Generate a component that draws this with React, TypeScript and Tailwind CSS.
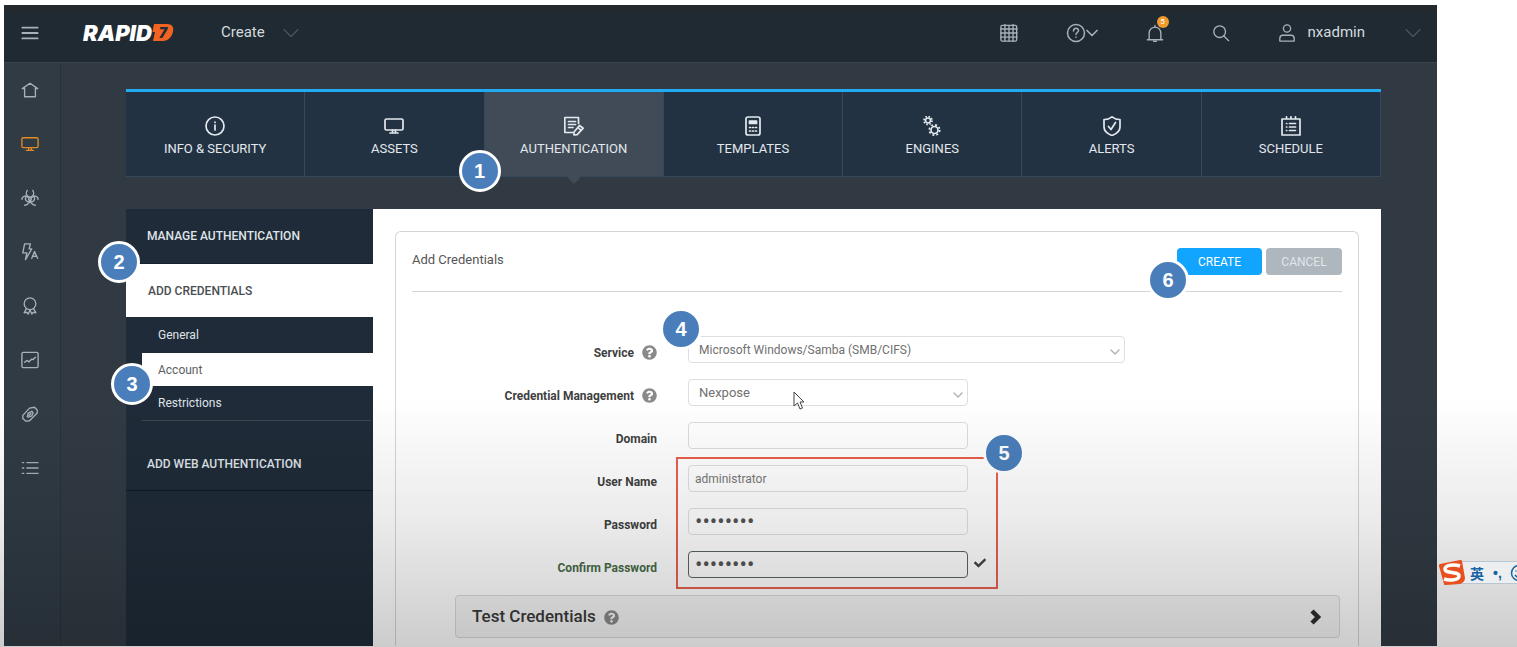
import { useState, type ReactNode } from 'react';
import { ChevronDown } from 'lucide-react';
import { FaCheck, FaQuestionCircle } from 'react-icons/fa';
import clsx from 'clsx';

const Icon = ({ size = 20, stroke = 1.5, children }: { size?: number; stroke?: number; children: ReactNode }) => (
  <svg
    width={size}
    height={size}
    viewBox="0 0 20 20"
    fill="none"
    stroke="currentColor"
    strokeWidth={stroke}
    strokeLinecap="round"
    strokeLinejoin="round"
    aria-hidden="true"
  >
    {children}
  </svg>
);

const MonitorIcon = () => (
  <>
    <rect x="1" y="3" width="18" height="11" rx="1.5" />
    <path d="M8.5 14v2.500M11.500 14v2.500M6 17h8" />
  </>
);

const sidebarItems = [
  { name: 'Home', icon: <path d="M1.500 8.500 10 2.500l8.500 6M4 8v9.500h12V8M1.500 8.500H4M16 8.500h2.500" /> },
  { name: 'Assets', active: true, icon: <MonitorIcon /> },
  {
    name: 'Vulnerabilities',
    icon: (
      <>
        <circle cx="10" cy="11" r="1.500" />
        <path d="M7 1.500C4.500 4.500 6 8.500 10 9c4-.5 5.500-4.500 3-7.500" />
        <path d="M1 11.500c.5-4 5.500-5 7.500-1.500M19 11.500c-.5-4-5.500-5-7.500-1.500" />
        <path d="M9.300 12.500C9.500 15.500 7 18 4 18M10.700 12.500C10.500 15.500 13 18 16 18M5.500 8.500c-1.500 3 0 6 4.500 6.500 4.500-.5 6-3.500 4.500-6.500" />
      </>
    ),
  },
  {
    name: 'Automated actions',
    icon: (
      <>
        <path d="M4 1h6.500L9 6.500h3L5 18.500 6.500 11H2z" />
        <path d="m12 17 3-7.500 3.500 7.500M13 14.700h4.500" />
      </>
    ),
  },
  {
    name: 'Policies',
    icon: (
      <>
        <circle cx="10" cy="7.500" r="6.500" />
        <path d="m6 13-2.500 4.500 3-.5 1.500 2 2-4.500 2 4.500 1.500-2 3 .5L14 13" />
      </>
    ),
  },
  {
    name: 'Reports',
    icon: (
      <>
        <rect x="1" y="1.500" width="18" height="17" rx="1.500" />
        <path d="m4 12.500 2.500-2L9 12l3-3 1.500.5L16 7" />
      </>
    ),
  },
  {
    name: 'Tags',
    icon: (
      <>
        <path d="M9.500 3.500 15 2.500l3 3V9l-8.500 8.500-4 .5L2 15v-3.500z" />
        <path d="m7 13 1-4 4-2 1.500 1.500L12 12l-4 1.500zM9 11.500l2-2" />
      </>
    ),
  },
  {
    name: 'Administration',
    icon: <path d="M1.500 4H3M1.500 10H3M1.500 16H3M6.500 4H19M6.500 10H19M6.500 16H19" />,
  },
];

const tabs = [
  {
    name: 'INFO & SECURITY',
    icon: (
      <>
        <circle cx="10" cy="10" r="9" />
        <path d="M10 9v5M10 6.200v.3" />
      </>
    ),
  },
  { name: 'ASSETS', icon: <MonitorIcon /> },
  {
    name: 'AUTHENTICATION',
    icon: (
      <>
        <path d="M14.500 7.500V1.500H.8v15h8M4.500 5.500h7M4.500 8.500h7M4.500 11.500H9" />
        <path d="m10 16 5.500-6.500 3.700 2.700-6 6.500-3.200.3zM14 11.500l2.500 2.500" />
      </>
    ),
  },
  {
    name: 'TEMPLATES',
    icon: (
      <>
        <rect x="3" y="1" width="14" height="18" rx="2" />
        <path d="M6.500 5h7v2.500h-7z" fill="currentColor" />
        <path d="M6.500 11.500h1M9.500 11.500h1M12.500 11.500h1M6.500 15h1M9.500 15h1M12.500 15h1" />
      </>
    ),
  },
  {
    name: 'ENGINES',
    icon: (
      <g strokeLinecap="butt">
        <circle cx="6" cy="4.500" r="2.500" />
        <circle cx="6" cy="4.500" r="4" strokeDasharray="1.570 1.570" />
        <circle cx="12.500" cy="14" r="3.500" />
        <circle cx="12.500" cy="14" r="5.200" strokeDasharray="2.040 2.040" />
      </g>
    ),
  },
  {
    name: 'ALERTS',
    icon: (
      <>
        <path d="M10 .8c2.500 2 5 2.700 8 2.700V11c0 4-4 7-8 8.500C6 18 2 15 2 11V3.500C5 3.500 7.500 2.800 10 .8z" />
        <path d="m6.500 10.500 2.500 3 4.500-7" />
      </>
    ),
  },
  {
    name: 'SCHEDULE',
    icon: (
      <>
        <path d="M1 3h18v16H1zM5.500.8V3M10 .8V3M14.500.8V3" />
        <path d="M5.500 7.500h.3M8.500 7.500h6M5.500 11h.3M8.500 11h6M5.500 14.500h.3M8.500 14.500h6" />
      </>
    ),
  },
];

const StepBadge = ({ step, className }: { step: number; className: string }) => (
  <span
    className={clsx(
      'absolute z-20 flex size-[42px] items-center justify-center rounded-full border-[3px] border-white bg-[#4a7ebb] font-["Liberation_Sans",sans-serif] text-xl font-bold text-white',
      className,
    )}
  >
    {step}
  </span>
);

const Logo = () => (
  <a href="#" aria-label="Rapid7" className="flex w-[95px] items-center">
    <span className='font-["Inter",sans-serif] text-[22px] leading-7 font-black text-white italic'>RAPID</span>
    <span className="relative flex h-[17px] w-[22px] shrink-0 items-center justify-center">
      <svg className="absolute inset-0" width="22" height="17" viewBox="0 0 22 17" aria-hidden="true">
        <path d="M2 0h13c5 0 7 3 6 7.500C20 13 16 17 11 17H1l2-9H.5z" fill="#f26322" />
      </svg>
      <span className='relative font-["Inter",sans-serif] text-sm leading-4 font-black text-[#1f2a33] italic'>7</span>
    </span>
  </a>
);

const Header = () => (
  <header className="flex h-[58px] items-center border-t-[6px] border-b border-t-[#26292c] border-b-[#3a444d] bg-[#1f2a33] pr-[10px] pb-2 text-[#a9b1b8]">
    <button aria-label="Menu" className="flex w-[57px] justify-center pr-1.5">
      <Icon size={18} stroke={2}>
        <path d="M1.500 4h17M1.500 10h17M1.500 16h17" />
      </Icon>
    </button>
    <div className="pl-[22px]">
      <Logo />
    </div>
    <button className="ml-[43px] flex items-center gap-3 text-[15px] text-[#d5dade]">
      Create
      <ChevronDown size={28} strokeWidth={1} className="text-[#4b5660]" />
    </button>
    <div className="ml-auto flex items-center gap-12">
      <button aria-label="Calendar">
        <Icon size={18} stroke={1.5}>
          <rect x="1" y="1.500" width="17.500" height="17.500" rx="1.500" />
          <path d="M1 5.500h18M1 10h18M1 14.500h18M5.500 1.500v17.500M10 1.500v17.500M14.500 1.500v17.500M5.500.5v1M14.500.5v1" />
        </Icon>
      </button>
      <button aria-label="Help" className="-mr-1 flex items-center">
        <Icon>
          <circle cx="10" cy="10" r="8.500" />
          <path d="M7.500 8c0-3.500 5-3.500 5-.5 0 2-2.500 2-2.500 4M10 14v.3" />
        </Icon>
        <ChevronDown size={20} strokeWidth={2} className="-ml-1" />
      </button>
      <button aria-label="Notifications" className="relative">
        <Icon size={18}>
          <path d="M1.500 17.500h17M3.500 17.500v-7C3.500 6.500 6 4 10 3.500c4 .5 6.500 3 6.500 7v7M10 3.500V1.500M8.500 19.300h3" />
        </Icon>
        <span className="absolute -top-2 left-[11px] size-3 rounded-full bg-[#ee9a2c] text-center text-[8px] leading-3 text-white">
          5
        </span>
      </button>
      <button aria-label="Search">
        <Icon size={18}>
          <circle cx="8.500" cy="8.500" r="6.500" />
          <path d="m13.500 13.500 5 5" />
        </Icon>
      </button>
      <button className="flex items-center text-[15px] text-[#d5dade]">
        <span className="mr-3 text-[#a9b1b8]">
          <Icon size={18}>
            <circle cx="10" cy="5" r="4" />
            <path d="M2 19v-3c0-2 1.500-3.500 3.500-3.500h9c2 0 3.500 1.500 3.500 3.500v3z" />
          </Icon>
        </span>
        nxadmin
        <ChevronDown size={28} strokeWidth={1} className="ml-[34px] text-[#4b5660]" />
      </button>
    </div>
  </header>
);

const Sidebar = () => (
  <nav className="w-[57px] shrink-0 border-r border-[#29323a] bg-[#303b44] pr-1 text-[#a9b1b8]">
    {sidebarItems.map((item) => (
      <a
        key={item.name}
        href="#"
        aria-label={item.name}
        className={clsx('flex h-[54px] items-center justify-center', item.active && 'text-[#e08a28]')}
      >
        <Icon size={18}>{item.icon}</Icon>
      </a>
    ))}
  </nav>
);

const Tabs = () => {
  const [active, setActive] = useState('AUTHENTICATION');

  return (
    <div className="grid grid-cols-7 border-t-[3px] border-b border-t-[#22aaf2] border-b-[#35495a] bg-[#223242]">
      {tabs.map((tab) => (
        <div key={tab.name} className="relative">
          <button
            onClick={() => setActive(tab.name)}
            className={clsx(
              'flex h-[84px] w-full flex-col items-center justify-center gap-[3px] border-r border-[#35495a] pt-1.5 text-[13px] leading-5 text-[#e3e9ee]',
              active === tab.name && 'bg-[#414b57]',
            )}
          >
            <Icon size={20} stroke={1.7}>
              {tab.icon}
            </Icon>
            {tab.name}
          </button>
          {active === tab.name && (
            <span className="absolute top-full left-1/2 -ml-2 border-x-8 border-t-8 border-x-transparent border-t-[#414b57]" />
          )}
          {tab.name === 'AUTHENTICATION' && <StepBadge step={1} className="top-[58px] -left-[26px]" />}
        </div>
      ))}
    </div>
  );
};

const AuthMenu = () => (
  <nav className="w-[247px] shrink-0 bg-[#1f2b38] text-xs text-[#dfe4e8]">
    <a href="#" className="flex h-[55px] items-center border-b border-[#17212b] pl-[21px] font-medium">
      MANAGE AUTHENTICATION
    </a>
    <div className="relative">
      <a href="#" className="flex h-[53px] items-center bg-white pl-[22px] font-medium text-[#4a4e52]">
        ADD CREDENTIALS
      </a>
      <StepBadge step={2} className="-top-[23px] -left-7" />
    </div>
    <div className="relative ml-4">
      <a href="#" className="flex h-9 items-center pl-4">
        General
      </a>
      <a href="#" className="flex h-[33px] items-center bg-white pl-4 text-[#5c6064]">
        Account
      </a>
      <a href="#" className="mr-0.5 flex h-[35px] items-center border-b border-[#3a4855] pl-4">
        Restrictions
      </a>
      <StepBadge step={3} className="top-[46px] -left-[31px]" />
    </div>
    <a href="#" className="mt-4 flex h-[54px] items-center border-b border-[#101a24] pl-[21px] font-medium">
      ADD WEB AUTHENTICATION
    </a>
  </nav>
);

const HelpMark = ({ className }: { className?: string }) => (
  <FaQuestionCircle size={15} className={clsx('text-[#8a8a8a]', className)} />
);

type RowProps = { id: string; label: string; help?: boolean; valid?: boolean; children: ReactNode };

const Row = ({ id, label, help, valid, children }: RowProps) => (
  <div className="flex h-[27px] items-center">
    <label
      htmlFor={id}
      className={clsx(
        'mr-[31px] flex w-[245px] items-center justify-end gap-2 pt-1.5 text-xs leading-5 font-bold',
        valid ? 'text-[#476b47]' : 'text-[#3f3f3f]',
      )}
    >
      {label}
      {help && <HelpMark />}
    </label>
    {children}
  </div>
);

const SelectBox = ({ id, value, className }: { id: string; value: string; className: string }) => (
  <div className={clsx('relative', className)}>
    <select
      id={id}
      className="h-[27px] w-full appearance-none rounded-sm border border-[#dfdfdf] bg-white px-[10px] text-[#707070]"
    >
      <option>{value}</option>
    </select>
    <ChevronDown size={16} strokeWidth={2} className="pointer-events-none absolute top-2 right-0.5 text-[#b0b0b0]" />
  </div>
);

const inputClass = 'h-[27px] w-[280px] rounded-sm border px-1.5 outline-none';

const CredentialsForm = () => (
  <form className="relative flex-1 rounded-t-md border border-b-0 border-[#d5d5d5] px-4">
    <div className="relative flex h-[60px] items-center justify-between border-b border-[#d5d5d5]">
      <h2 className="pb-1 text-[13px] text-[#555]">Add Credentials</h2>
      <div className="flex gap-1 text-xs text-white">
        <button type="button" className="h-[27px] w-[85px] rounded-sm bg-[#12a5ff]">
          CREATE
        </button>
        <button type="button" className="h-[27px] w-[76px] rounded-sm bg-[#aeb7bd] text-[#e1e5e8]">
          CANCEL
        </button>
      </div>
      <StepBadge step={6} className="top-[27px] right-[153px]" />
    </div>

    <div className="relative mt-11 flex flex-col gap-4">
      <Row id="service" label="Service" help>
        <SelectBox id="service" value="Microsoft Windows/Samba (SMB/CIFS)" className="w-[437px] text-xs" />
      </Row>
      <StepBadge step={4} className="-top-7 left-[248px]" />
      <Row id="management" label="Credential Management" help>
        <SelectBox id="management" value="Nexpose" className="w-[280px] text-[13px]" />
      </Row>
      <svg className="absolute top-[55px] left-[381px]" width="12" height="19" viewBox="0 0 12 19" aria-hidden="true">
        <path d="M1 1v14l3.500-3 2.500 6 2.500-1-2.500-6H11z" fill="#fff" stroke="#444" />
      </svg>
      <Row id="domain" label="Domain">
        <input id="domain" type="text" className={clsx(inputClass, 'border-[#dcdcdc] bg-white text-xs')} />
      </Row>

      <div className="relative flex flex-col gap-4">
        <Row id="username" label="User Name">
          <input
            id="username"
            type="text"
            defaultValue="administrator"
            className={clsx(inputClass, 'border-[#dfdfdf] text-xs text-[#777]')}
          />
        </Row>
        <Row id="password" label="Password">
          <input
            id="password"
            type="password"
            defaultValue="password"
            className={clsx(inputClass, 'border-[#dfdfdf] text-[22px] text-[#555]')}
          />
        </Row>
        <Row id="confirm" label="Confirm Password" valid>
          <input
            id="confirm"
            type="password"
            defaultValue="password"
            className={clsx(inputClass, 'border-[#5c6468] text-[22px] text-[#555]')}
          />
          <FaCheck size={12} className="mb-1 ml-1.5 text-[#444]" />
        </Row>
        <div className="pointer-events-none absolute -top-2 -bottom-[11px] left-[264px] w-[322px] border-2 border-[#e8604f]">
          <StepBadge step={5} className="-top-[27px] -right-[29px]" />
        </div>
      </div>
    </div>

    <button
      type="button"
      className="mt-[17px] mr-0.5 ml-[43px] flex h-[43px] w-[calc(100%-45px)] items-center rounded border border-[#dadada] bg-[#f6f6f6] px-4 text-[17px] font-medium text-[#3a3a3a]"
    >
      Test Credentials
      <HelpMark className="mt-0.5 ml-2" />
      <svg className="ml-auto" width="16" height="18" viewBox="0 0 16 18" fill="none" aria-hidden="true">
        <path d="m5 3 6 6-6 6" stroke="#2f2f2f" strokeWidth="4.500" />
      </svg>
    </button>
  </form>
);

const ImeBar = () => (
  <div className="absolute top-[554px] left-px z-40 flex w-[200px] items-center">
    <svg width="28" height="27" viewBox="0 0 28 27" className="relative z-10" aria-hidden="true">
      <path d="M2 5 22 1c1 0 2 0 2 1l3 17c0 3-2 5-5 6L8 26c-1 0-2 0-2-1L1 7c0-1 0-2 1-2z" fill="#e8501f" />
      <path d="M22 7c-6-2-15-1-15 3 0 5 14 2 14 7 0 4-9 5-15 3" fill="none" stroke="#fff" strokeWidth="3.500" />
    </svg>
    <div className='-ml-2 flex h-[23px] flex-1 items-center border-y border-[#b8c6d4] bg-[#eceeef] pl-3 font-["Noto_Sans_CJK_SC",sans-serif] text-sm font-bold text-[#1763a6]'>
      英
      <span className='ml-[9px] font-["Liberation_Sans",sans-serif] text-sm leading-4'>•,</span>
      <svg
        width="18"
        height="18"
        viewBox="0 0 18 18"
        className="ml-2"
        fill="none"
        stroke="currentColor"
        strokeWidth="1.500"
        aria-hidden="true"
      >
        <circle cx="9" cy="9" r="7.500" />
        <path d="M6 6.500v1M12 6.500v1M5 11c2 3 6 3 8 0" />
      </svg>
    </div>
  </div>
);

const App = () => (
  <div className='relative flex min-h-screen overflow-hidden bg-white pt-[5px] pb-px pl-1 font-["Roboto",sans-serif]'>
    <div className="flex min-w-0 flex-1 flex-col bg-[#313a43]">
      <Header />
      <div className="flex flex-1">
        <Sidebar />
        <main className="flex min-w-0 flex-1 flex-col pt-[26px] pr-14 pl-[65px]">
          <Tabs />
          <div className="mt-8 flex flex-1">
            <AuthMenu />
            <section className="flex flex-1 bg-white px-[22px] pt-[22px]">
              <CredentialsForm />
            </section>
          </div>
        </main>
      </div>
    </div>
    <aside className="relative w-20 shrink-0">
      <ImeBar />
    </aside>
    <div className="pointer-events-none absolute inset-x-0 bottom-0 z-30 h-[250px] bg-linear-to-b from-transparent via-black/8 to-black/20" />
  </div>
);

export default App;
